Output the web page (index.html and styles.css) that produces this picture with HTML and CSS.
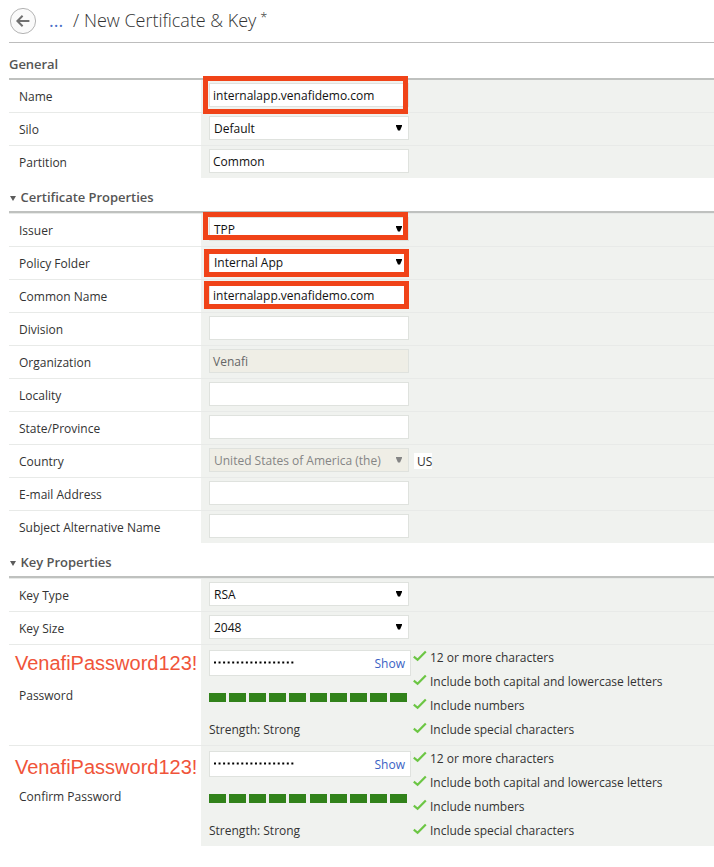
FILE: index.html
```html
<!DOCTYPE html>
<html lang="en">
<head>
<meta charset="utf-8">
<title>New Certificate &amp; Key</title>
<link rel="stylesheet" href="styles.css">
</head>
<body>
<svg class="defs" width="0" height="0">
  <symbol id="check" viewBox="0 0 14 12"><path d="M.8 6.6 4.6 9.8 12.8 1.4" fill="none" stroke="#6cc644" stroke-width="2.2"/></symbol>
  <symbol id="down" viewBox="0 0 6 6"><path d="M0 0H6V1L4 5.6H2L0 1Z" fill="currentColor"/></symbol>
</svg>
<header class="crumbs">
  <svg class="back" viewBox="0 0 28 28"><circle cx="14" cy="14" r="12.6" fill="#fafafa" stroke="#b4b4b4"/><path d="M20.4 14H8.8M13.6 8.8 8.4 14l5.2 5.2" fill="none" stroke="#707070" stroke-width="2"/></svg>
  <a class="dots">...</a><span class="slash">/</span><h1>New Certificate &amp; Key</h1><sup>*</sup>
</header>

<h2>General</h2>
<section class="table first">
  <div class="row"><label>Name</label><div class="cell"><div class="field">internalapp.venafidemo.com</div><i class="mark mark-name"></i></div></div>
  <div class="row"><label>Silo</label><div class="cell"><div class="field select">Default<svg><use href="#down"/></svg></div></div></div>
  <div class="row"><label>Partition</label><div class="cell"><div class="field">Common</div></div></div>
</section>

<h2 class="fold"><i class="tri"></i><span>Certificate Properties</span></h2>
<section class="table">
  <div class="row"><label>Issuer</label><div class="cell"><div class="field select">TPP<svg><use href="#down"/></svg></div><i class="mark mark-issuer"></i></div></div>
  <div class="row"><label>Policy Folder</label><div class="cell"><div class="field select">Internal App<svg><use href="#down"/></svg></div><i class="mark mark-policy"></i></div></div>
  <div class="row"><label>Common Name</label><div class="cell"><div class="field">internalapp.venafidemo.com</div><i class="mark mark-common"></i></div></div>
  <div class="row"><label>Division</label><div class="cell"><div class="field"></div></div></div>
  <div class="row"><label>Organization</label><div class="cell"><div class="field off">Venafi</div></div></div>
  <div class="row"><label>Locality</label><div class="cell"><div class="field"></div></div></div>
  <div class="row"><label>State/Province</label><div class="cell"><div class="field"></div></div></div>
  <div class="row"><label>Country</label><div class="cell"><div class="field select off">United States of America (the)<svg><use href="#down"/></svg></div><span class="code">US</span></div></div>
  <div class="row"><label>E-mail Address</label><div class="cell"><div class="field"></div></div></div>
  <div class="row"><label>Subject Alternative Name</label><div class="cell"><div class="field"></div></div></div>
</section>

<h2 class="fold"><i class="tri"></i><span>Key Properties</span></h2>
<section class="table">
  <div class="row"><label>Key Type</label><div class="cell"><div class="field select">RSA<svg><use href="#down"/></svg></div></div></div>
  <div class="row"><label>Key Size</label><div class="cell"><div class="field select">2048<svg><use href="#down"/></svg></div></div></div>
  <div class="row tall">
    <label>Password</label><b class="note">VenafiPassword123!</b>
    <div class="cell">
      <div class="secret">
        <div class="field pw"><svg class="mask"><path d="M0 1.5H81"/></svg><a>Show</a></div>
        <div class="meter"><i></i><i></i><i></i><i></i><i></i><i></i><i></i><i></i><i></i><i></i></div>
        <p>Strength: Strong</p>
      </div>
      <ul>
        <li><svg><use href="#check"/></svg><span>12 or more characters</span></li>
        <li><svg><use href="#check"/></svg><span>Include both capital and lowercase letters</span></li>
        <li><svg><use href="#check"/></svg><span>Include numbers</span></li>
        <li><svg><use href="#check"/></svg><span>Include special characters</span></li>
      </ul>
    </div>
  </div>
  <div class="row tall">
    <label>Confirm Password</label><b class="note confirm">VenafiPassword123!</b>
    <div class="cell">
      <div class="secret">
        <div class="field pw"><svg class="mask"><path d="M0 1.5H81"/></svg><a>Show</a></div>
        <div class="meter"><i></i><i></i><i></i><i></i><i></i><i></i><i></i><i></i><i></i><i></i></div>
        <p>Strength: Strong</p>
      </div>
      <ul>
        <li><svg><use href="#check"/></svg><span>12 or more characters</span></li>
        <li><svg><use href="#check"/></svg><span>Include both capital and lowercase letters</span></li>
        <li><svg><use href="#check"/></svg><span>Include numbers</span></li>
        <li><svg><use href="#check"/></svg><span>Include special characters</span></li>
      </ul>
    </div>
  </div>
</section>
</body>
</html>
```
FILE: styles.css
```css
* { box-sizing: border-box; }
body { margin: 0; padding-left: 9px; background: #fff; color: #333; font: 12px/18px "Open Sans", "Noto Sans", sans-serif; overflow: hidden; }
.defs { display: block; height: 0; }
.crumbs { display: flex; height: 43px; border-bottom: 1px solid #bdbdbd; line-height: 40px; font-size: 18px; font-weight: 300; color: #333; }
.back { width: 28px; height: 28px; margin-top: 7px; }
.dots { width: 24px; margin-left: 12px; color: #4a6fc8; font-weight: 400; }
.slash { width: 11px; }
h1 { margin: 0; font: inherit; letter-spacing: -.03px; }
sup { margin-left: 4px; font-size: 13px; line-height: 34px; vertical-align: baseline; }
h2 { display: flex; align-items: center; height: 35px; margin: 0; padding-top: 6px; font-size: 13px; font-weight: 600; letter-spacing: -.04px; line-height: 18px; color: #555; }
h2.fold { height: 33px; padding-top: 5px; }
.tri { width: 0; margin: 3px 4px 0 1px; border: solid transparent; border-width: 5px 3.5px 0; border-top-color: #5c5c5c; }
.fold span { padding-left: .6px; }
.table { border-top: 2px solid #bfc1bf; box-shadow: inset 0 1px #e8eae8; padding-top: 1px; }
.table.first { padding-top: 0; box-shadow: none; }
.row { position: relative; display: flex; height: 33px; border-bottom: 1px solid #e8eae8; }
.row:last-child { height: 32px; border: 0; }
.row.tall { height: 101px; }
.row.tall:last-child { height: 100px; }
label { width: 192px; padding-left: 10px; align-self: center; padding-top: 1px; }
.cell { position: relative; display: flex; flex: 1; align-items: flex-start; padding: 3px 0 0 8px; background: #f0f2ef; }
.field { position: relative; display: flex; align-items: center; justify-content: space-between; width: 200px; height: 24px; padding: 2px 4px 0 3px; background: #fff; border: 1px solid #dfe2de; color: #111; }
.select { padding-left: 4px; }
.select svg { width: 6px; height: 6px; margin: -2px 2px 0 0; color: #000; }
.off { background: #efeee6; color: #666; }
.off.select { color: #858585; }
.off.select svg { color: #858585; }
.code { margin: 5px 0 0 5px; padding-left: 3px; width: 18px; height: 16px; line-height: 17px; background: #fff; }
.mark { position: absolute; z-index: 1; left: 2px; width: 205px; height: 28px; border: 5px solid #f04318; }
.mark-name { top: -4px; height: 38px; }
.mark-issuer { top: -2px; }
.mark-policy { top: 2px; left: 3px; }
.mark-common { top: 1px; left: 3px; }
.tall .cell { padding-top: 5px; }
.secret { width: 202px; }
.pw { width: 202px; height: 26px; padding-right: 5px; }
.pw a { color: #3a62c4; }
.mask { width: 82px; height: 3px; margin: -3px 0 0 .5px; }
.mask path { stroke: #000; stroke-width: 2; stroke-dasharray: 2 2.55; }
.meter { display: flex; gap: 3px; margin-top: 17px; width: 198px; }
.meter i { width: 17px; height: 9px; background: #31821a; }
.meter i:nth-child(6) { margin-left: 1px; }
p { margin: 19px 0 0; }
ul { list-style: none; margin: -1px 0 0 2px; padding: 0; }
li { display: flex; height: 24px; line-height: 18px; }
li svg { width: 14px; height: 12px; margin: 1px 3px 0 0; }
.note { position: absolute; left: 6px; top: 6px; font: 20px/24px "Liberation Sans", sans-serif; color: #f0543a; white-space: nowrap; }
.note.confirm { top: 9px; }
```
